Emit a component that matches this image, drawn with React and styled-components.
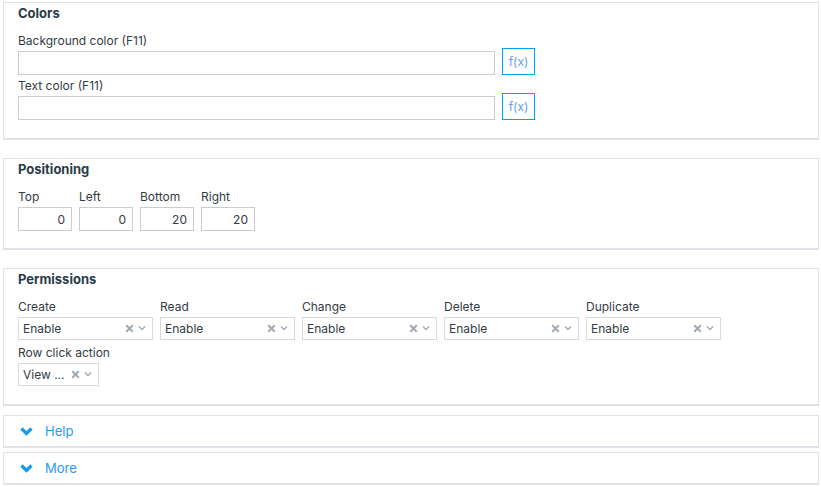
import React from 'react';
import styled, { createGlobalStyle } from 'styled-components';

const GlobalStyle = createGlobalStyle`
  html, body {
    margin: 0;
    padding: 0;
    background: #fff;
    font-family: Inter, "Noto Sans", sans-serif;
    color: #333b44;
  }
`;

const Page = styled.div`
  padding: 2px 2px 0 3px;
  display: flex;
  flex-direction: column;
`;

const Panel = styled.section`
  border: 1px solid #dfe3e8;
  border-bottom-width: 2px;
  padding: 1px 14px ${p => p.$pb || 18}px;
  margin-bottom: ${p => p.$gap || 18}px;
`;

const Title = styled.h3`
  margin: 0 0 10px;
  font-size: 13px;
  line-height: 18px;
  font-weight: 700;
  color: #2b3a48;
`;

const Label = styled.div`
  font-size: 12px;
  line-height: 18px;
  margin-bottom: 1px;
  color: #333b44;
`;

const Field = styled.div`
  display: flex;
  flex-direction: column;
  margin-bottom: ${p => p.$mb || 0}px;
`;

const Row = styled.div`
  display: flex;
  align-items: flex-start;
  gap: 7px;
`;

const TextInput = styled.input`
  box-sizing: border-box;
  width: 477px;
  height: 24px;
  border: 1px solid #c8cdd2;
  border-radius: 0;
  padding: 0 5px;
  font: inherit;
  font-size: 12px;
  outline: none;
`;

const FxButton = styled.button`
  box-sizing: border-box;
  width: 33px;
  height: 27px;
  margin-top: -3px;
  border: 1px solid #00a3f5;
  background: #fff;
  color: #6b9be8;
  font-family: Inter, sans-serif;
  font-size: 12px;
  padding: 0;
`;

const Grid = styled.div`
  display: flex;
  gap: 7px;
  margin-bottom: ${p => p.$mb || 0}px;
`;

const NumInput = styled.input`
  box-sizing: border-box;
  width: 54px;
  height: 24px;
  border: 1px solid #c8cdd2;
  border-radius: 0;
  padding: 0 6px;
  text-align: right;
  font: inherit;
  font-size: 12px;
  color: #333b44;
  outline: none;
`;

const SelectBox = styled.div`
  box-sizing: border-box;
  width: ${p => p.$w}px;
  height: 23px;
  border: 1px solid #d5dae0;
  display: flex;
  align-items: center;
  padding: 0 6px 1px 4px;
  font-size: 12px;
  color: #333b44;
`;

const SelectValue = styled.span`
  flex: 1;
  white-space: nowrap;
`;

const SelectIcons = styled.span`
  display: flex;
  align-items: center;
  gap: 4px;
  color: #a0abb6;
`;

const Collapser = styled.div`
  border: 1px solid #dfe3e8;
  border-bottom-width: 2px;
  height: 30px;
  display: flex;
  align-items: center;
  padding-left: 16px;
  gap: 12px;
  color: #1f9ef0;
  font-size: 13px;
  margin-bottom: ${p => p.$gap || 0}px;
`;

const ClearIcon = () => (
  <svg width="9" height="9" viewBox="0 0 9 9">
    <path d="M1.2 1.2L7.8 7.8M7.8 1.2L1.2 7.8" stroke="currentColor" strokeWidth="2" strokeLinecap="butt" />
  </svg>
);

const CaretIcon = () => (
  <svg width="8" height="6" viewBox="0 0 8 6">
    <path d="M1 1.5L4 4.5L7 1.5" stroke="currentColor" strokeWidth="1.4" fill="none" />
  </svg>
);

const Chevron = () => (
  <svg width="13" height="9" viewBox="0 0 13 9">
    <path d="M1.5 1.5L6.5 6.5L11.5 1.5" stroke="#1a9bea" strokeWidth="3.2" fill="none" />
  </svg>
);

function Select({ value, width }) {
  return (
    <SelectBox $w={width}>
      <SelectValue>{value}</SelectValue>
      <SelectIcons>
        <ClearIcon />
        <CaretIcon />
      </SelectIcons>
    </SelectBox>
  );
}

const positions = [
  { label: 'Top', value: '0' },
  { label: 'Left', value: '0' },
  { label: 'Bottom', value: '20' },
  { label: 'Right', value: '20' },
];

const perms = ['Create', 'Read', 'Change', 'Delete', 'Duplicate'];

export default function App() {
  return (
    <Page>
      <GlobalStyle />
      <Panel>
        <Title>Colors</Title>
        <Field $mb={2}>
          <Label>Background color (F11)</Label>
          <Row>
            <TextInput defaultValue="" />
            <FxButton>f(x)</FxButton>
          </Row>
        </Field>
        <Field>
          <Label>Text color (F11)</Label>
          <Row>
            <TextInput defaultValue="" />
            <FxButton>f(x)</FxButton>
          </Row>
        </Field>
      </Panel>

      <Panel $pb={17}>
        <Title>Positioning</Title>
        <Grid>
          {positions.map(p => (
            <Field key={p.label}>
              <Label>{p.label}</Label>
              <NumInput defaultValue={p.value} />
            </Field>
          ))}
        </Grid>
      </Panel>

      <Panel $gap={9}>
        <Title>Permissions</Title>
        <Grid $mb={4}>
          {perms.map(p => (
            <Field key={p}>
              <Label>{p}</Label>
              <Select value="Enable" width={135} />
            </Field>
          ))}
        </Grid>
        <Field>
          <Label>Row click action</Label>
          <Select value="View ..." width={81} />
        </Field>
      </Panel>

      <Collapser $gap={4}>
        <Chevron />
        <span>Help</span>
      </Collapser>
      <Collapser>
        <Chevron />
        <span>More</span>
      </Collapser>
    </Page>
  );
}
